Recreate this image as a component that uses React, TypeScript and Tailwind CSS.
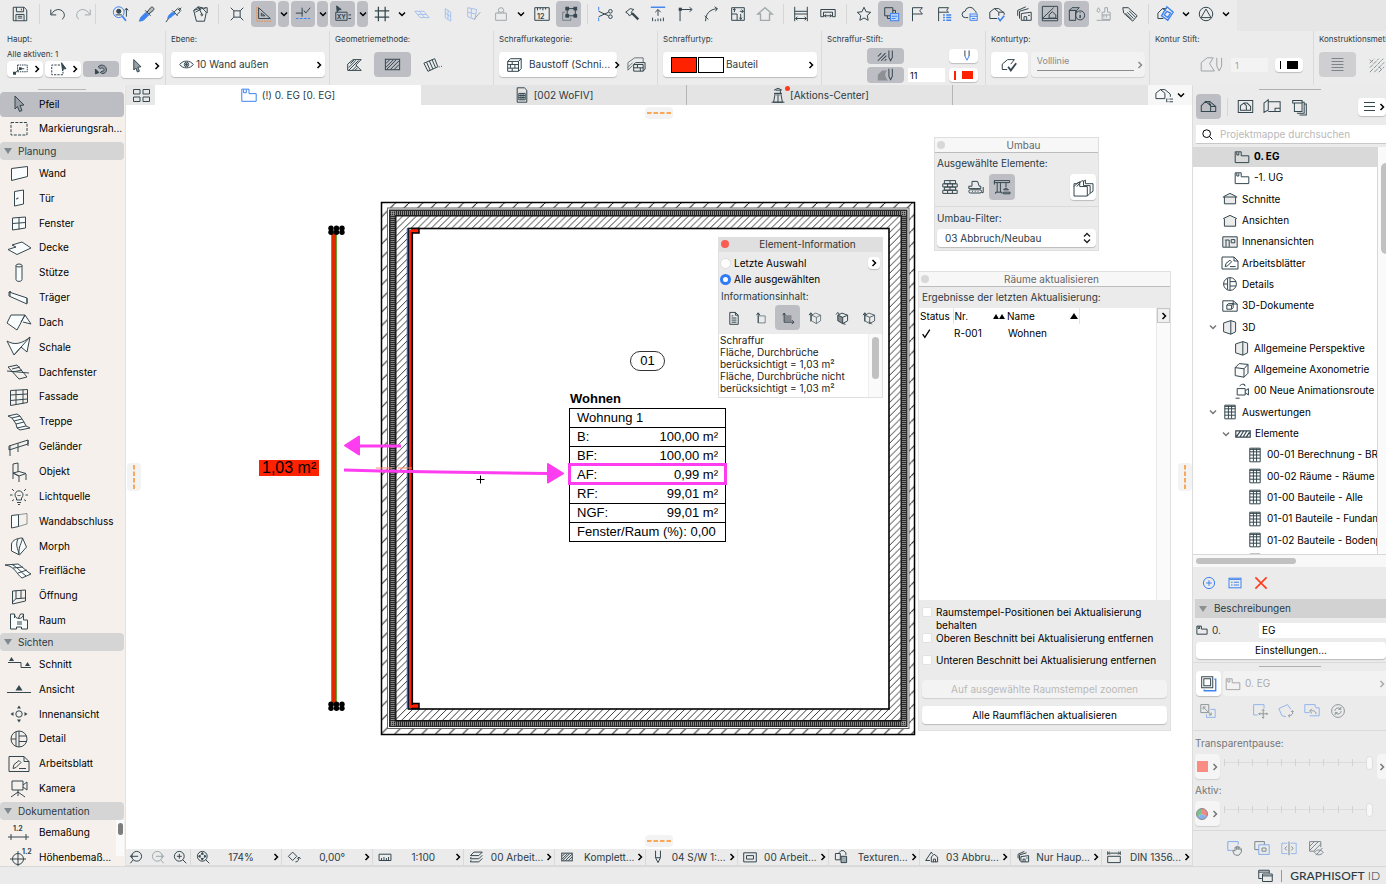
import React from "react";

const B = "#3f83f0";
const O = "#f28b3c";

const ICONS: Record<string, React.ReactNode> = {
  save: <><path d="M2.500 2.500h12l3 3v12h-15z" /><path d="M6 2.500v5h8v-5M5.500 17.500v-7h9v7M7.500 12.500h5M7.500 14.500h5M11.500 4v2" /></>,
  undo: <path d="M2 5v6h6M2.500 10.500C6 4 13 3.500 16 8c2 3 1 6-1.500 8" />,
  redo: <path d="M18 5v6h-6M17.500 10.500C14 4 7 3.500 4 8c-2 3-1 6 1.500 8" />,
  find: <><circle cx="7.500" cy="8" r="6" stroke={B} /><path d="M11.500 12.500l4 5" stroke={B} strokeWidth="2" /><circle cx="7.500" cy="7" r="2.300" fill="currentColor" /><path d="M4 11h7M16 4v9M14 6l2-2.500L18 6" /></>,
  pipette: <><path d="M9 8l-6 6-1.500 4L6 17l6-6" fill={B} stroke={B} /><path d="M8 6l6 6M10 8l4-5c2-2 5 1 3 3l-5 4z" fill="currentColor" fillOpacity=".3" /></>,
  syringe: <><path d="M8 8l-4 4-1 3 3-1 6-5" fill={B} stroke={B} /><path d="M1 19l3-4M8 6l6 6M10 8l4-4 3 3-4 4M15 3l3 3M16 5l2-2" /></>,
  bucket: <path d="M3 6l3 12h9l2-10-5-5zM3 6L8 2l8 2M8 2l4 8M12 10a1 1 0 1 0 .1 0M15 3h3v6M5 8l7-4" />,
  target: <path d="M6.500 6.500h7v7h-7zM3 3l3.500 3.500M17 3l-3.500 3.500M3 17l3.500-3.500M17 17l-3.500-3.500" />,
  triangle: <><path d="M4 3v12h13zM7 9v3h4z" /><path d="M2 2v16h16" stroke={O} strokeDasharray="2 1" /></>,
  guide: <><path d="M2 9h8M9 3v10M11 6l2 3 5-6" /><path d="M2 15h16" stroke={B} strokeDasharray="3 1.500" /></>,
  xy: <><path d="M2 8h12.500v9H2zM16 11h3M16 15h3" /><path d="M3 1l5 4-3 .5L3.500 8z" fill="currentColor" /><text x="3" y="15" fontSize="7" fontWeight="700" fill="currentColor" stroke="none">XY</text></>,
  hash: <path d="M6 2v16M13.500 2v16M2 6.500h16M2 13.500h16" strokeWidth="1.400" />,
  plane1: <path d="M2 7h10l6 7H8zM5 10.500h10M7 7l6 7" stroke={B} />,
  plane2: <path d="M7 4l6 4v10l-6-4zM7 9l6 4M10 6v10" stroke={B} />,
  plane3: <><path d="M3 3l10 2-2 11-8-3zM7 4v10M3 8l9 2" stroke={B} /><path d="M17 8l-7 8" /></>,
  weight: <path d="M4 9h12v8H4zM7 9V7M13 9V7M7 6a3 3 0 1 1 6 0l-1.500 2h-3z" />,
  ruler: <><path d="M2 3h16v14H2zM5 3v3M8 3v2M11 3v3M14 3v2" /><text x="4.500" y="15" fontSize="8" fontWeight="600" fill="currentColor" stroke="none">12</text></>,
  nodes: <><path d="M8 4h9v8H8z" /><g fill="currentColor"><rect x="6.500" y="2.500" width="3" height="3" /><rect x="15.500" y="2.500" width="3" height="3" /><rect x="6.500" y="10.500" width="3" height="3" /><rect x="15.500" y="10.500" width="3" height="3" /></g><path d="M3 8v9h9v-3M3 8h3" opacity=".5" /></>,
  scissors: <><path d="M3 2v4M3 14v4" stroke={B} /><path d="M3 7l11 5M3 13l11-5" /><circle cx="16" cy="13" r="2" /><circle cx="16" cy="7" r="2" /></>,
  hammer: <><path d="M3 8l5-4 4 1-3 3 1 2-3 2-1-2z" /><path d="M10 9l7 7" strokeWidth="2.500" /></>,
  upbars: <><path d="M2 2.500h16" stroke={B} strokeWidth="1.600" /><path d="M10 12V5M7 8l3-3 3 3M4 18v-4M7 18v-2M13 18v-3M16 18v-4M10 18v-3" /></>,
  corner: <><path d="M4.500 18V5H17" /><path d="M3 3h3.500v3.500H3z" fill="currentColor" stroke="none" /><path d="M15 2.500l3 2.500-3 2.500" /></>,
  arc: <><path d="M4 18C4 10 8 5 17 4" /><path d="M14 2l3 2-2 3M3 12l4 4" /></>,
  resize: <path d="M3 3h14v14H3zM3 10h6v7M12 7h4M14 5l2 2-2 2M6 8V4M4.500 5.500L6 4l1.500 1.500M13 10v6M11.500 14l1.500 2 1.500-2" />,
  roof: <path d="M2 10l8-7 8 7h-3v7H5v-7z" strokeWidth="1.500" />,
  stretch: <path d="M3 2v16M17 2v16M3 7h14M3 10h14M4 15h12M6 13l-2 2 2 2M14 13l2 2-2 2" />,
  fit: <path d="M2 5h16v8h-3V8H5v5H2zM6 12h8M8 10.500L6 12l2 1.500M12 10.500l2 1.500-2 1.500" />,
  star: <path d="M10 2.500l2.300 5 5.200.6-3.900 3.600 1 5.300-4.600-2.600L5.400 17l1-5.300L2.500 8.100l5.200-.6z" />,
  copyblue: <><path d="M3 3h9v9H3z" /><path d="M6 12v3h3M12 6h3v3" /><rect x="9.500" y="9.500" width="9" height="8" fill="#bdd3f7" stroke={B} /><path d="M11 12.500h6M11 15h4" stroke={B} /></>,
  flag: <path d="M5 18V3h11l-3 3.500L16 10H5" />,
  flaglist: <><path d="M4 18V3h11l-2 3 2 2H4" /><path d="M9 11h2M12.500 11H18M9 14h2M12.500 14H18M9 17h2M12.500 17H18" stroke={B} strokeWidth="1.700" /></>,
  cloud: <><path d="M8 14H5a3.500 3.500 0 0 1-.5-7A5.500 5.500 0 0 1 15 6a3.500 3.500 0 0 1 2 3" /><rect x="10" y="10" width="8" height="7" stroke={B} /><path d="M10 12.500h8M12 15h4" stroke={B} /></>,
  housecheck: <><path d="M10 15H2V8l5-4 5 4v4M7 4h5l6 5v2M12 8h6" /><path d="M11 14l2.500 3.500L18 12" stroke={B} strokeWidth="1.800" /></>,
  cards: <path d="M7 9.500l11-1.500v9H7zM5 15V7l10-3M3 12V6l9-4M10 17v-4h3v4M14.500 11.500h2" />,
  frame: <><path d="M1.500 1.500h17v16h-17zM1.500 15L14 3" /><path d="M9 14.500v-3.500l3.500-3.500 4 3.500v3.500zM2 15h16" /></>,
  boxinfo: <><path d="M1.500 6l3-3h8l-3 3zM1.500 6h7v11h-7zM9.500 6v2" /><circle cx="13.500" cy="11.500" r="5" /><path d="M13.500 11v3.500M13.500 8.300v1" strokeWidth="1.600" /></>,
  brush: <path d="M12 3h3v5h3v3H9V8h3zM9 11v5h9v-5M5 3c-3 4-1 5 0 5s3-1 0-5zM3 17h15M11 11v3M14 11v3" />,
  tag: <path d="M2 3h6l10 9-5 6-10-9zM5.500 6.500h.1M7 8l7 7M9 6.500l7 7M5 9l7 7" />,
  houseblue: <><path d="M1 15V9l5-5 4 2M1 15h6M6 4h5" /><path d="M11 2l7 6-6 9-7-5zM11 7l4 2-3 5-4-3z" stroke={B} strokeWidth="1.500" /></>,
  circletri: <><circle cx="10" cy="10" r="7.500" /><path d="M10 4.500l-5.500 9.500h11z" /></>,
  marquee: <rect x="2" y="3.500" width="16" height="12.500" strokeDasharray="3 1.300" />,
  arrow: <path d="M6 2l9 9-4 .5 2 5-2.500 1-2-5L6 15z" fill="#9aa0a5" />,
  magnet: <><path d="M9 15c5 4 11-1 8-7-2-4-8-5-11-1l3 2.500c2-2 4-1 5 .5s0 4-2.500 3z" fill="currentColor" fillOpacity=".3" /><path d="M2 10l5 5-5 2z" fill="currentColor" /></>,
  poly: <path d="M3 16V9l6-5h9l-6 6 6 6zM4 13l8-8M4 16L15 5M8 16l5-5M11 16l3-3M6 8.500l4-4" />,
  rect: <><rect x="2.500" y="4.500" width="15" height="11" /><path d="M3 9l4-4M3 13l8-8M4 15L14 5M8 15l9-9M12 15l5-5" /></>,
  rotrect: <path d="M1 8l12-5 3.500 9-11 5zM4 7l4 9M7 5.500l4 9M10 4l4 9M17.500 12h1M20 11.500h1" />,
  brick: <path d="M3 6l3-3h12v11l-3 3H3zM3 6h12v11M15 6l3-3M3 9.500h12M3 13.500h12M8 6v3.500M11 9.500v4M6 9.500v4M8 13.500V17" />,
  brick2: <><path d="M1 16V8l7-5h9v5M1 13l5-5M1 16l5-5" opacity=".7" /><path d="M7 10l2-2h10v7l-2 2H7zM7 10h10v7M7 13.500h10M11 10v3.500M14 13.500V17" /></>,
  hpen: <path d="M1 15l9-9M5 15l6-6M1 10l4-4M9 15l2-2M14 3v8l2 4 2-4V3" />,
  fpen: <><path d="M1 16V9l5-5h6c-4 4-2 8 1 12z" fill="#8d9196" stroke="none" /><path d="M14 2v9l2 4 2-4V2" /></>,
  penblue: <><path d="M7 2v8M13 2v8" /><path d="M7 10l3 6 3-6" stroke={B} /></>,
  contour: <><path d="M8 15H2.500V9l6-5H16l-4 5" /><path d="M9 12l3 4 6-8" strokeWidth="2" /></>,
  cpen: <path d="M1 15V8l5-4h5L8 9l4 6zM14 4v7l2 4 2-4V4" />,
  lines: <path d="M3 3h14M3 6.500h14M3 10h14M3 13.500h14M3 17h14" />,
  hatchbox: <path d="M2 8l5-5M2 13L12 3M2 18L17 3M7 18L18 7M12 18l6-6M2 4l3 3M12 12l3 3" strokeDasharray="5 1" />,
  grid4: <path d="M2.500 4.500H9V9H2.500zM12 4.500h6.500V9H12zM2.500 12H9v4.500H2.500zM12 12h6.500v4.500H12z" />,
  storyblue: <path d="M2 3.500h8v5h8V17H2zM4 4v3.500h3V4" stroke={B} />,
  story: <path d="M1.500 3.500H9v5h9.500V17h-17zM3.500 4v3.500H6V4" />,
  sheet: <path d="M4 1h9l3 3v15H4zM6 8h8v8H6zM6 10.700h8M6 13.300h8M8.700 8v8M11.300 8v8" />,
  lighthouse: <path d="M6.500 8h7l2 11h-11zM5 8h10M7 4h6v4M5 4l5-2.500L15 4M10 11v8M8 10h4M2 19h16" />,
  houselist: <><path d="M11 14H1V8l5-4 5 4v6zM6 4h5l6 5v3" /><path d="M13 14v4M14 14.500h1M16 14.500h4M14 17.500h1M16 17.500h4" /></>,
  wall: <path d="M2.500 5.500l16-2v10l-16 4z" fill="#fafdfd" />,
  door: <path d="M5.500 3.500l9-1.500v14l-9 2zM7 11l2-.5v-1" fill="#fafdfd" />,
  window: <path d="M3.500 5l13-1v11l-13 2zM10 4.500v12M3.500 10.500l13-1" fill="#fafdfd" />,
  slab: <path d="M-1 11.500l8-2.500-4-2L13 4l9 6-14 6.500z" fill="#fafdfd" />,
  column: <><path d="M7 2.500v14c0 2.500 6 2.500 6 0v-14" fill="#fafdfd" /><ellipse cx="10" cy="2.500" rx="3" ry="1.500" /></>,
  beam: <path d="M0 4l18 6v6L0 8zM0 4l2-.5M1 4v4M18 10v5" fill="#fafdfd" />,
  roofp: <path d="M2 3h14l-8 15-10-7zM12 10l4-7 6 9-8-2" fill="#fafdfd" />,
  shell: <path d="M-2 4c8 5 16 2 23-4l-3 15-6-5-7 8zM21 0L5 18" fill="#fafdfd" />,
  skylight: <path d="M-1 5l9-2 10 12-8 2zM-2 9l22 2M4 10l9-2M3 7l8-2" />,
  curtain: <path d="M1.500 3.500l17-1v13l-17 3zM7 3v15M14 2.700v14M1.500 8l17-1M1.500 13.500l17-1.500" />,
  stair: <path d="M-1 4l9-2 3 2-8 2zM3 6l2 3 8-2-2-3M5 9l2 3 8-2-2-3M7 12l1 4 9-2-2-4M8 16l3 2 10-2-4-2" fill="#fafdfd" />,
  rail: <path d="M0 9l19-6v4L0 13zM1 9v10M9 6v9M19 3v6" />,
  chair: <path d="M4 2l5-1v9M4 2v15M4 11l6-1.500 7 2-7 2.500zM10 14v6M17 12v6M4 11l6 3" />,
  bulb: <><path d="M7.500 14v-2a4 4 0 1 1 5 0v2zM8 16.500h4M9 18.500h2M8.500 9l1 1 1-1 1 1" /><path d="M1 9h2.500M16.500 9H19M3 3l2 2M17 3l-2 2M3 15l2-1.500M17 15l-2-1.500" /></>,
  wallend: <><path d="M2.500 4.500l7-.8V15.500l-7 1.500z" fill="#fafdfd" /><path d="M9.500 3.700L18 2.500v10.500l-8.500 2.500" opacity=".55" /></>,
  morph: <path d="M2.500 8c1-4 6-6 11-6l4 9-7 8-8-4zM9 3c-3 6 0 10 1 15M13.500 2c-1 6-4 8-3.500 16" fill="#fafdfd" />,
  mesh: <path d="M-4 4l13-1c5 3 9 8 13 10l-9 4C8 14 6 5-4 4zM3 3.500c5 2 9 8 14 11.500M4 7l10-1M9 12l9-3" fill="#fafdfd" />,
  opening: <path d="M3.500 5l13-1v11l-13 3zM7 4.700v8l9.500-.7M7 12.700L3.500 16M12 4.500v8" />,
  room: <path d="M1.500 3h4c0 6 9 6 9 0v6h4v9h-6v-2h-5v2h-6zM8 11h5M8 13h5M5.500 3v4M14.500 3h-3l-2 4" fill="#fafdfd" />,
  section: <><path d="M-1 8.500h13v5M12 13.500h10" /><path d="M0 7l2.500-4L5 7zM16 12l2.500-4 2.500 4z" fill="currentColor" stroke="none" /></>,
  elevation: <><path d="M-2 13.500h24" /><path d="M6.500 11.500L10 6l3.500 5.500z" fill="currentColor" stroke="none" /></>,
  interior: <><circle cx="10" cy="10" r="3.200" /><path d="M10 1.500l2 3H8zM10 18.500l2-3H8zM1.500 10l3-2v4zM18.500 10l-3-2v4z" fill="currentColor" stroke="none" /></>,
  detail: <><circle cx="10" cy="10" r="8" /><path d="M7 3v14M10 2v16M10 7h7.500M10 12.500h7.500M7 10H2" /></>,
  worksheet: <path d="M0 2.500h15l5 5v10H0zM15 2.500v5h5M4 14.500l1-4 5-4 2 2-5 5zM10 14.500h7" />,
  camera: <path d="M3 2h11v9H3zM14 6l4-3v8l-4-3M9 11v3M9 13l-7 5M9 13l7 5M9 13v4" />,
  dim: <><path d="M-1 14h21M2 11v6M17 11v6" /><text x="4" y="8" fontSize="7" fontWeight="700" fill="currentColor" stroke="none">1.2</text></>,
  level: <><circle cx="9" cy="11" r="5.500" /><path d="M1 11h16M9 3v16" /><text x="13" y="6" fontSize="7" fontWeight="700" fill="currentColor" stroke="none">1.2</text></>,
  eye: <><path d="M1 10c4-6 14-6 18 0-4 6-14 6-18 0z" /><circle cx="10" cy="10" r="3" /><circle cx="10" cy="10" r="1.300" fill="currentColor" /></>,
  house: <path d="M1.500 16V9l5-5 6 5v7zM6.500 4h5l7 6v6h-6M12.500 10h6M10 4l3 5" />,
  houseframe: <path d="M1.500 3h17v14h-17zM4 14.500V9l4-3 3 3v5.500zM8 6h4l4 4v4.500h-5" />,
  layout: <path d="M0 6l5-4v12l-5 3zM5 4.500h14V16H5M13 16v-4h6" />,
  books: <path d="M2 3h11v3H2zM4 6v10h9V6M13 5h2.500v13H7M16 7h2v13h-8" />,
  storys: <path d="M2 7l8-4 8 4M1 7.500h18M3 7.500V16h14V7.500" fill="#ececec" />,
  elev: <path d="M1.500 7L10 3l8.500 4M3 7v9.500h14V7" fill="#ececec" />,
  inner: <path d="M1 3.500h18v13H1zM5 16V7.500h4V16M11.500 7H16v4h-4.500zM3.500 7.500h1" fill="#ececec" />,
  doc3d: <path d="M1 3.500h13l5 4v9H1zM6 9h6v5H6zM6 9l2-2h6v5l-2 2M12 9l2-2M14 3.500v4h5" />,
  persp: <path d="M2 5l9-3 6 2v12l-6 3-9-3zM11 2v17" fill="#ececec" />,
  axon: <path d="M1.500 7l5-5 11 1v11l-5 5-11-2zM1.500 7l11 1.500V19M12.500 8.500l5-5.500" fill="#fafafa" />,
  route: <path d="M4 7h10v8H4zM14 10l4-3v8l-4-3M2 19h5M7 4c2-3 5-3 7-1M12 1l2 3" />,
  tablei: <path d="M3.500 1.500h13v17h-13zM3.500 6h13M3.500 10h13M3.500 14h13M8 2v16M12 2v16M3.500 3h13" />,
  hatchi: <path d="M1 6h18v8H1zM2 13l5-7M6 14l5-8M10 14l5-8M14 14l4-6" strokeWidth="1.500" />,
  plus: <><circle cx="10" cy="10" r="7" /><path d="M10 6.500v7M6.500 10h7" /></>,
  listb: <><rect x="2.500" y="4" width="15" height="12" /><path d="M3 5.500h14M5 9h2M8.500 9H15M5 12.500h2M8.500 12.500H15" /></>,
  cross: <path d="M3 3l14 14M17 3L3 17" strokeWidth="2" />,
  pages: <><path d="M2 2h13v13H2zM4.500 4.500h8v8h-8z" /><path d="M17 5h1.500v13.500H5V17" stroke={B} strokeWidth="1.600" /></>,
  swap: <><path d="M1 2h10v10H1z" /><path d="M8 14v4h11V8h-6" stroke={B} /><path d="M4 5l10 10M4 8V5h3M14 12v3h-3" /></>,
  move: <><path d="M7 15H2V2h13v5" stroke={B} /><path d="M14 8v11M8.500 13.500h11M12.500 9.500L14 8l1.500 1.500M12.500 17.500L14 19l1.500-1.500M10 12l-1.500 1.500L10 15M18 12l1.500 1.500L18 15" /></>,
  rot: <><path d="M10 17l-5-1L1 7l11-5 4 6" stroke={B} /><path d="M18 10c1 4-1 6-5 6M15 14l-2 2 2 2M16.500 11L18 9.500l1.500 1.500" /></>,
  back: <><path d="M7 12H1V2h13v3M7 16h12V6h-5" stroke={B} /><path d="M15 14c0-4-3-5-7-4M10 7l-3 3 3 3" /></>,
  cycle: <><circle cx="10" cy="10" r="8" /><path d="M6 10a4 4 0 0 1 7-2.500M13.500 5v3h-3M14 10a4 4 0 0 1-7 2.500M6.500 15v-3h3" /></>,
  hand: <><path d="M6 13H1V2h13v4" stroke={B} /><path d="M9 18l-2-5 2 0 1 1V9h2v3V8h2v4V9h2v3l2-1v4l-3 4h-4z" /></>,
  overlap: <><path d="M6 12H1V2h12v4" /><path d="M6 6h13v12H6z" stroke={B} /><path d="M10 10h5v4h-5z" /></>,
  split: <><path d="M8 4H1v13h7M12 4h7v13h-7" stroke={B} strokeOpacity=".8" /><path d="M10 2v17M7 8l-2 2.500L7 13M13 8l2 2.500-2 2.500" /></>,
  hatcheye: <path d="M8 14H2V2h14v7M2 8l6-6M2 13L13 2M7 14l9-9M8 15.500c3-4 8-4 11 0-3 4-8 4-11 0zM18 10l-8 9" />,
  zoomback: <><circle cx="11" cy="9" r="7" /><path d="M13 9H2M5 6L2 9l3 3M6 14l-4 5" /></>,
  zoomfwd: <><circle cx="9" cy="9" r="7" /><path d="M7 9h11M15 6l3 3-3 3M14 14l4 5" /></>,
  zoomin: <><circle cx="9" cy="9" r="7" /><path d="M9 5.500v7M5.500 9h7M14 14l5 5" /></>,
  zoomfit: <><circle cx="9" cy="9" r="7" /><path d="M14 14l5 5" /><path d="M9 3.500l1.500 2.500h-3zM9 14.500l1.500-2.500h-3zM3.500 9L6 7.500v3zM14.500 9L12 7.500v3z" fill="currentColor" /></>,
  rotate: <path d="M8 3l6 6-6 6-6-6zM12 17c4 0 5-3 5-7M14.500 12.500L17 10l2.500 2.500" />,
  scale: <path d="M1.500 6h17v9h-17zM5 15v-3.500M8.500 15v-5M12 15v-3.500M15 15v-5" />,
  layers: <path d="M2 8l5-5h12l-5 5zM3 10l-1 2.500h12l5-5M3 14.500L2 17h12l5-5" />,
  pen: <path d="M6.500 1v10l3.500 7 3.500-7V1M6.500 11h7" />,
  frame2: <path d="M1 4h18v13H1zM5 8h10v5H5z" />,
  override: <><path d="M2 5h7v9H2zM7 4l3-3h4l3 3v3" /><path d="M10 9h8v9h-8z" fill="currentColor" fillOpacity=".4" /></>,
  reno: <path d="M1 15L9 3l2 3M9 10l4-4 5 4v7H9zM12 17v-4h3v4M1 15h6" />,
  dims: <path d="M1 9h18v9H1zM1 2v5M19 2v5M2 4.500h16M4 2.500l-2 2 2 2M16 2.500l2 2-2 2" />,
  wallbrick: <path d="M3 2h14v4H3zM1 6h18v4H1zM3 10h14v4H3zM1 14h18v4H1zM10 2v4M7 6v4M13 6v4M10 10v4M7 14v4M13 14v4" />,
  dozer: <path d="M5 9V3h7l2 6h2v3H1V9zM3 17.500a2 2 0 0 1 0-4h12a2 2 0 0 1 0 4zM5 15.500h1M8.500 15.500h1M12 15.500h1M19 10v7h-2" />,
  crane: <path d="M.5 2h19v2.500H.5zM4 4.500v12M8 4.500v12M2 18.500v-2h8v2M15 4.500v6M12 13.500c0-2 6-2 6 0zM12 16.500h8v2h-8zM.5 2v5" />,
  folder3: <path d="M0 6h3l3-2v5h8v10H0zM6 5l2-2h2v5h7v8l-3 3M10 4l2-2v4h8v8l-3 2M0 9l5-5M3 9l4-5" />,
  page: <path d="M4 2h8l4 4v13H4zM12 2v4h4M6.500 7H9M6.500 10h7M6.500 13h7M6.500 16h7" />,
  axisY: <><path d="M6 7h10v10H6z" opacity=".6" /><path d="M6 17V3M3.500 6L6 2.500 8.500 6" /></>,
  axisXY: <><path d="M5 6h10v9H5z" fill="#87898e" stroke="none" /><path d="M4.500 3v13H18M2.500 6l2-3 2 3M15.500 13l3 3-3 2.500" /></>,
  cube: <><path d="M5 6l6-3 7 3v8l-6 4-7-4zM5 6l7 3v9M12 9l6-3" opacity=".65" /><path d="M4 15V3M1.500 6L4 2.500 6.500 6" /></>,
  cubef: <><path d="M4 6l7 3v9l-7-4z" fill="#87898e" /><path d="M4 6l6-3 8 3v8l-7 4M11 9l7-3M1.500 5L4 2l2.500 3M11 18l4 1" /></>,
  cubea: <><path d="M4 6l6-3 8 3v8l-7 4-7-4zM4 6l7 3v9M11 9l7-3" opacity=".8" /><path d="M4 15V3M1.500 6L4 2.500 6.500 6M10 15l4 4" /></>,
  windows: <path d="M5 14H1V3h14v4M1 5.500h14M6 8h13v10H6zM6 10.500h13" />,
  check: <path d="M3 11l4 6L16 3" strokeWidth="2.400" />,
  search: <><circle cx="8.500" cy="8.500" r="7" /><path d="M13.500 13.500L19 19" /></>,
  sel1: <><rect x="6" y="4" width="13" height="9" strokeDasharray="2 1" /><path d="M2 15l8-6h5" /><path d="M0 13h4v4H0zM8 7h3.500v3.500H8z" fill="currentColor" stroke="none" /></>,
  sel2: <><path d="M12 4H1v13h15v-4" strokeDasharray="3 1.500" /><path d="M14 1l6 8-3.500 0-1 3z" fill="currentColor" /></>,
};

function Icon({ name, size = 20, className = "text-[#34474f]" }: { name: string; size?: number; className?: string }) {
  return (
    <svg aria-hidden="true" width={size} height={size} viewBox="0 0 20 20" fill="none" stroke="currentColor" strokeWidth={20 / size} className={"shrink-0 overflow-visible " + className}>
      {ICONS[name]}
    </svg>
  );
}

function Chevron({ dir = "right", className = "" }: { dir?: "right" | "down"; className?: string }) {
  return (
    <svg aria-hidden="true" width="8" height="8" viewBox="0 0 8 8" fill="none" stroke="currentColor" strokeWidth="1.500" className={"shrink-0 " + className}>
      <path d={dir === "right" ? "M2.500 1L5.500 4L2.500 7" : "M1 2.500L4 5.500L7 2.500"} />
    </svg>
  );
}

const white = "rounded bg-white shadow-[0_1px_1px_rgba(0,0,0,0.2)]";
const W: Record<number, string> = {
  1: "w-1", 2: "w-2", 6: "w-1.5", 10: "w-2.5", 13: "w-[13px]", 14: "w-[14px]", 20: "w-5", 26: "w-[26px]", 27: "w-[27px]", 30: "w-[30px]",
};

type Tool = [kind: string, width: number, state?: "on" | "dim"];
const TOOLS: Tool[] = [
  ["save", 30], ["|", 2], ["undo", 30], ["redo", 20, "dim"], ["|", 1], ["", 10], ["find", 27], ["pipette", 26], ["syringe", 27], ["bucket", 26], ["|", 10],
  ["target", 27], ["triangle", 27, "on"], ["v", 13, "on"], ["guide", 26, "on"], ["v", 13, "on"], ["xy", 27, "on"], ["v", 13, "on"], ["hash", 26], ["v", 14],
  ["plane1", 26, "dim"], ["plane2", 26, "dim"], ["plane3", 26, "dim"], ["weight", 27, "dim"], ["v", 14], ["ruler", 27], ["nodes", 27, "on"], ["|", 10],
  ["scissors", 26], ["hammer", 27], ["upbars", 26], ["corner", 27], ["arc", 26], ["resize", 27], ["roof", 27, "dim"], ["|", 10],
  ["stretch", 26], ["fit", 27], ["|", 10], ["star", 26], ["copyblue", 27, "on"], ["flag", 26], ["flaglist", 27], ["cloud", 26], ["housecheck", 27], ["cards", 27],
  ["frame", 26, "on"], ["boxinfo", 27, "on"], ["brush", 26, "dim"], ["tag", 27], ["|", 10], ["houseblue", 26], ["v", 14], ["circletri", 26], ["v", 14],
];

function Toolbar() {
  return (
    <div className="flex h-[31px] shrink-0 bg-[#e6e6e6]">
      <div className="flex items-center bg-[#ececec] pb-[3px] pl-[5px] pr-1">
        {TOOLS.map(([k, w, s], i) =>
          k === "" ? <span key={i} className={W[w]} /> :
          k === "|" ? <span key={i} className={"flex justify-center " + W[w]}><i className="h-5 w-px bg-[#d6d6d6]" /></span> : (
            <button key={i} aria-label={k === "v" ? "Menü" : k} className={"flex h-[26px] shrink-0 px-px " + W[w]}>
              <span className={"flex h-full w-full items-center justify-center rounded " + (s === "on" ? "bg-[#bdbdc4]" : s === "dim" ? "opacity-40" : "")}>
                {k === "v" ? <Chevron dir="down" className="text-black" /> : <Icon name={k} size={18} />}
              </span>
            </button>
          ))}
      </div>
    </div>
  );
}

function Section({ label, children }: { label: string; children: React.ReactNode }) {
  return (
    <section className="flex h-[54px] w-[164px] shrink-0 flex-col border-r border-[#dadada] pl-[5px] pr-1 pt-px">
      <h2 className="h-[13px] whitespace-nowrap text-[8px] leading-[14px]">{label}</h2>
      {children}
    </section>
  );
}

function InfoBox() {
  return (
    <div className="flex shrink-0 overflow-hidden bg-[#ececec]">
      <section className="flex h-[54px] w-[166px] shrink-0 gap-[2px] border-r border-[#dadada] pl-[7px] pt-px">
        <div>
          <h2 className="h-[13px] text-[8px] leading-[14px]">Haupt:</h2>
          <p className="mt-[3px] h-[12px] text-[8px] leading-[12px]">Alle aktiven: 1</p>
          <div className="mt-px flex gap-[2px]">
            <button aria-label="Auswahl" className={"flex h-4 w-9 items-center justify-between pl-1.5 pr-[2px] " + white}><Icon name="sel1" size={15} /><Chevron className="text-black" /></button>
            <button aria-label="Markierung" className={"flex h-4 w-9 items-center justify-between pl-1.5 pr-[2px] " + white}><Icon name="sel2" size={15} /><Chevron className="text-black" /></button>
            <button aria-label="Magnet" className="flex h-4 w-9 items-center justify-center rounded bg-[#bdbdc4]"><Icon name="magnet" size={14} /></button>
          </div>
        </div>
        <button aria-label="Pfeil" className={"mt-[21px] flex h-[25px] w-[42px] items-center justify-between pl-2 pr-[2px] " + white}><Icon name="arrow" size={16} /><Chevron className="text-black" /></button>
      </section>
      <Section label="Ebene:">
        <button className={"mt-[7px] flex h-[25px] items-center gap-[2px] px-2 text-[10px] " + white}><Icon name="eye" size={15} />10 Wand außen<Chevron className="-mr-1.5 ml-auto text-black" /></button>
      </Section>
      <Section label="Geometriemethode:">
        <div className="mt-[7px] flex items-center gap-[2px]">
          <button aria-label="Polygon" className="flex h-[25px] w-[37px] items-center justify-center rounded"><Icon name="poly" size={18} /></button>
          <button aria-label="Rechteck" className="flex h-[25px] w-[37px] items-center justify-center rounded bg-[#bdbdc4]"><Icon name="rect" size={19} /></button>
          <button aria-label="Gedrehtes Rechteck" className="flex h-[25px] w-[37px] items-center justify-center rounded"><Icon name="rotrect" size={18} /></button>
        </div>
      </Section>
      <Section label="Schraffurkategorie:">
        <div className="mt-[7px] flex items-center gap-[2px]">
          <button className={"flex h-[25px] w-[118px] items-center gap-1.5 whitespace-nowrap pl-1.5 pr-px text-[10px] " + white}><Icon name="brick" size={18} />Baustoff (Schni...<Chevron className="-ml-[3px] text-black" /></button>
          <button aria-label="Baustoff" className="flex h-[25px] w-[36px] items-center justify-center"><Icon name="brick2" size={19} /></button>
        </div>
      </Section>
      <Section label="Schraffurtyp:">
        <button className={"mt-[7px] flex h-[25px] items-center gap-px px-2 text-[10px] " + white}>
          <i className="h-4 w-[26px] border border-black bg-[#ff2200]" /><i className="mr-px h-4 w-[26px] border border-black bg-white" />Bauteil<Chevron className="-mr-1.5 ml-auto text-black" />
        </button>
      </Section>
      <section className="h-[54px] w-[164px] shrink-0 border-r border-[#dadada] pl-[5px] pt-px">
        <h2 className="h-[13px] text-[8px] leading-[14px]">Schraffur-Stift:</h2>
        <div className="-mt-px ml-10 grid w-[112px] grid-cols-[37px_37px_29px] items-center gap-x-1 gap-y-[3px]">
          <button aria-label="Vordergrundstift" className="mt-1 flex h-4 items-center justify-center rounded bg-[#bdbdc4]"><Icon name="hpen" size={17} /></button>
          <span />
          <button aria-label="Stift" className={"mt-1 flex h-[14px] items-center justify-center pl-1.5 " + white}><Icon name="penblue" size={14} /></button>
          <button aria-label="Hintergrundstift" className="flex h-4 items-center justify-center rounded bg-[#bdbdc4]"><Icon name="fpen" size={17} /></button>
          <input aria-label="Stiftnummer" defaultValue="11" className="h-[14px] w-full bg-white pl-[2px] text-[9px] text-black" />
          <button aria-label="Stiftfarbe" className={"flex h-[14px] items-center justify-center gap-1.5 " + white}><i className="h-[9px] w-[2px] bg-[#ff2200]" /><i className="h-2 w-[11px] bg-[#ff2200]" /></button>
        </div>
      </section>
      <Section label="Konturtyp:">
        <div className="mt-[7px] flex gap-[3px]">
          <button aria-label="Kontur" className={"flex h-[25px] w-[37px] items-center justify-center " + white}><Icon name="contour" size={18} /></button>
          <button disabled className="flex h-[25px] w-[115px] items-center gap-[2px] rounded bg-[#f2f2f2] pb-1 pl-1.5 pr-px text-left text-[9px] text-[#8b8b8b] shadow-[0_1px_1px_rgba(0,0,0,0.12)]"><span className="flex-1 border-b border-[#8b8b8b] pb-[3px]">Volllinie</span><Chevron className="mt-1" /></button>
        </div>
      </Section>
      <Section label="Kontur Stift:">
        <div className="ml-[45px] mt-[12px] flex items-center gap-[7px]">
          <Icon name="cpen" size={24} className="-my-1 opacity-40" />
          <input aria-label="Konturstift" disabled defaultValue="1" className="h-[14px] w-[37px] bg-[#f3f3f3] pl-1 text-[9px] text-[#a0a0a0]" />
          <button aria-label="Konturfarbe" className={"flex h-[14px] w-7 items-center justify-center gap-1.5 " + white}><i className="h-2 w-px bg-black" /><i className="h-2 w-[11px] bg-black" /></button>
        </div>
      </Section>
      <Section label="Konstruktionsmethode:">
        <div className="mt-[7px] flex gap-[12px]">
          <button aria-label="Methode 1" className="flex h-[25px] w-[37px] items-center justify-center rounded bg-[#cfcfd2]"><Icon name="lines" size={17} className="opacity-50" /></button>
          <button aria-label="Methode 2" className="flex h-[25px] items-center"><Icon name="hatchbox" size={18} className="opacity-50" /></button>
        </div>
      </Section>
    </div>
  );
}

const PLAN: [string, string][] = [
  ["wall", "Wand"], ["door", "Tür"], ["window", "Fenster"], ["slab", "Decke"], ["column", "Stütze"], ["beam", "Träger"], ["roofp", "Dach"], ["shell", "Schale"], ["skylight", "Dachfenster"], ["curtain", "Fassade"],
  ["stair", "Treppe"], ["rail", "Geländer"], ["chair", "Objekt"], ["bulb", "Lichtquelle"], ["wallend", "Wandabschluss"], ["morph", "Morph"], ["mesh", "Freifläche"], ["opening", "Öffnung"], ["room", "Raum"],
];
const VIEWS: [string, string][] = [["section", "Schnitt"], ["elevation", "Ansicht"], ["interior", "Innenansicht"], ["detail", "Detail"], ["worksheet", "Arbeitsblatt"], ["camera", "Kamera"]];
const DOCS: [string, string][] = [["dim", "Bemaßung"], ["level", "Höhenbemaß..."]];

function PaletteItem({ icon, label, on }: { icon: string; label: string; on?: boolean }) {
  return (
    <button className={"flex w-full min-h-0 items-center gap-[10px] whitespace-nowrap pl-[9px] text-left text-[10px] text-black " + (on ? "rounded bg-[#bdbdc4]" : "")}>
      <Icon name={icon} />{label}
    </button>
  );
}
function PaletteHead({ label }: { label: string }) {
  return <h3 className="flex h-[18px] shrink-0 items-center gap-1.5 rounded-sm bg-[#d5d5d5] pl-1 text-[10px]"><i className="border-x-4 border-t-[6px] border-x-transparent border-t-[#7f8a8e]" />{label}</h3>;
}

function Palette() {
  return (
    <aside className="flex w-[126px] shrink-0 flex-col border-r border-[#e2e2e2] bg-[#f5f0eb] pr-px">
      <div className="h-[7px] shrink-0 bg-[#ececec] pt-1"><i className="mx-auto block h-px w-12 bg-[#b8b8b8]" /></div>
      <div className="grid h-[49px] shrink-0 auto-rows-fr"><PaletteItem icon="arrow" label="Pfeil" on /><PaletteItem icon="marquee" label="Markierungsrah..." /></div>
      <div className="mt-px"><PaletteHead label="Planung" /></div>
      <div className="mt-px grid h-[472px] shrink-0 auto-rows-fr">{PLAN.map(([i, l]) => <PaletteItem key={l} icon={i} label={l} />)}</div>
      <PaletteHead label="Sichten" />
      <div className="mt-px grid h-[149px] shrink-0 auto-rows-fr">{VIEWS.map(([i, l]) => <PaletteItem key={l} icon={i} label={l} />)}</div>
      <div className="mt-px"><PaletteHead label="Dokumentation" /></div>
      <div className="flex min-h-0 flex-[1_1_0] overflow-hidden">
        <div className="grid h-[50px] flex-1 auto-rows-fr">{DOCS.map(([i, l]) => <PaletteItem key={l} icon={i} label={l} />)}</div>
        <div className="h-9 w-2 bg-[#fafafa] pt-[3px]"><i className="mx-auto block h-3 w-[5px] rounded-full bg-[#7d7d7d]" /></div>
      </div>
    </aside>
  );
}

function Tabs() {
  const tab = "flex w-[266px] items-center justify-center gap-1 border-r text-[10px]";
  return (
    <nav className="flex h-5 shrink-0 bg-[#e4e4e4]">
      <button aria-label="Übersicht" className="flex w-[29px] items-center justify-center bg-[#e8e8e8]"><Icon name="grid4" /></button>
      <button className={tab + " border-transparent bg-white"}><Icon name="storyblue" size={18} />(!) 0. EG [0. EG]</button>
      <button className={tab + " border-[#b5b5b5]"}><Icon name="sheet" size={16} />[002 WoFIV]</button>
      <button className={tab + " border-[#b5b5b5]"}><span className="relative"><Icon name="lighthouse" size={16} /><i className="absolute -right-1 -top-px h-[5px] w-[5px] rounded-full bg-[#ff3b1e]" /></span>[Aktions-Center]</button>
      <span className="flex-1" />
      <button aria-label="Ansicht wählen" className="flex w-11 items-center justify-center gap-1 bg-[#f7f7f7]"><Icon name="houselist" size={18} /><Chevron dir="down" className="text-black" /></button>
    </nav>
  );
}

function Drawing() {
  const dots = [228, 232, 704, 708];
  return (
    <svg aria-hidden="true" width="1066" height="744" viewBox="126 105 1066 744" className="absolute left-0 top-0">
      <defs>
        <pattern id="wide" width="13.600" height="13.600" patternUnits="userSpaceOnUse"><path d="M-1 14.600L14.600 -1" stroke="#222" strokeWidth="1" /></pattern>
        <pattern id="tight" width="6.800" height="6.800" patternUnits="userSpaceOnUse"><path d="M-1 7.800L7.800 -1M-1 1L1 -1M5.800 7.800L7.800 5.800" stroke="#222" strokeWidth=".9" /></pattern>
      </defs>
      <rect x="381" y="202" width="534" height="533" fill="#fff" />
      <rect x="381" y="202" width="534" height="533" fill="url(#wide)" />
      <rect x="387.500" y="208" width="521.500" height="520.500" fill="#fff" stroke="#666" />
      <rect x="389" y="209.500" width="518.500" height="517.500" fill="#2b2b2b" />
      <g stroke="#a2a2a2" strokeWidth="4" strokeDasharray=".8 1.200"><path d="M391 213H906M391 723.700H906M392.600 211V726M904 211V726" /></g>
      <rect x="396" y="216" width="505" height="504.500" fill="#fff" stroke="#111" />
      <rect x="396" y="216" width="505" height="504.500" fill="url(#tight)" />
      <rect x="408.500" y="228.500" width="480.500" height="480.500" fill="#fff" stroke="#000" strokeWidth="1.600" />
      <rect x="381.500" y="202.500" width="533" height="532" fill="none" stroke="#000" strokeWidth="1.500" />
      <path d="M411 228.500h8v4.500h-8M411 708.500h8v-5h-8" fill="#ff2200" stroke="#000" strokeWidth="1.500" />
      <rect x="409" y="230" width="3" height="478" fill="#ff2200" />
      <path d="M412.300 232V705" stroke="#000" strokeWidth="1.600" />
      <path d="M407.500 228V709" stroke="#2b62b8" strokeWidth="1.500" />
      <rect x="331.500" y="230" width="5" height="476" fill="#e02a00" stroke="#62a53a" />
      {dots.map((y) => [331, 336.5, 342].map((x) => <circle key={x + "-" + y} cx={x} cy={y + 0.3} r="2.700" fill="#000" />))}
      <path d="M376 468h16M398 468h14" stroke="#ff8f66" />
      <g stroke="#ff3df0" strokeWidth="3" fill="#ff3df0" strokeLinejoin="round">
        <path d="M401 446H356" /><path d="M345 445.500l14-9v18z" strokeWidth="2" />
        <path d="M344 470l36 1 60 1 108 1.500" /><path d="M548 464l15 9.500-15 9z" strokeWidth="2" />
      </g>
      <path d="M476.500 479.500h8M480.500 475.500v8" stroke="#000" />
    </svg>
  );
}

const STAMP = [["B:", "100,00 m²"], ["BF:", "100,00 m²"], ["AF:", "0,99 m²"], ["RF:", "99,01 m²"], ["NGF:", "99,01 m²"]];

function Stamp() {
  return (
    <div className="absolute left-[443px] top-[286px] w-[157px] font-['Liberation_Sans',sans-serif] text-[13px] text-black">
      <h3 className="pl-px text-[13px] font-bold leading-4">Wohnen</h3>
      <table className="mt-px h-[133px] w-full table-fixed border-collapse bg-white leading-4">
        <tbody>
          <tr><td colSpan={2} className="border border-black px-[7px] py-px">Wohnung 1</td></tr>
          {STAMP.map(([k, v]) => (
            <tr key={k} className="border border-black"><td className="py-px pl-[7px]">{k}</td><td className="py-px pr-[7px] text-right">{v}</td></tr>
          ))}
          <tr><td colSpan={2} className="whitespace-nowrap border border-black px-[7px] py-px">Fenster/Raum (%): 0,00</td></tr>
        </tbody>
      </table>
      <i className="absolute -left-px top-[72px] h-[22px] w-[159px] border-[3px] border-[#ff3df0]" />
    </div>
  );
}

function Title({ text, red }: { text: string; red?: boolean }) {
  return (
    <header className={"relative flex h-[15px] shrink-0 items-center justify-center border-b pl-[14px] text-[10px] leading-3 " + (red ? "border-transparent bg-[#dfdfdf] text-[#333]" : "border-[#bdbdbd] bg-[#f7f7f7] text-[#666]")}>
      <button aria-label="Schließen" className={"absolute left-[2px] top-[3px] h-2 w-2 rounded-full " + (red ? "bg-[#fb5c54]" : "bg-[#d8d8d8]")} />
      {text}
    </header>
  );
}

function ElementInfo() {
  const radio = "h-[11px] w-[11px] appearance-none rounded-full border border-[#ddd] bg-white checked:border-[3px] checked:border-[#2f7cf6]";
  return (
    <section className="absolute left-[592px] top-[132px] flex h-[161px] w-[165px] flex-col border border-t-0 border-[#e0e0e0] bg-[#ebebeb] text-[10px]">
      <Title text="Element-Information" red />
      <div className="flex h-[19px] items-center justify-between pl-px pr-[2px] pt-[3px]">
        <label className="flex items-center gap-[3px] text-black"><input type="radio" name="sel" className={radio} />Letzte Auswahl</label>
        <button aria-label="Mehr" className={"flex h-3 w-3 items-center justify-center text-black " + white}><Chevron /></button>
      </div>
      <label className="flex h-[17px] items-center gap-[3px] pl-px text-black"><input type="radio" name="sel" defaultChecked className={radio} />Alle ausgewählten</label>
      <p className="pl-[2px] leading-[16px]">Informationsinhalt:</p>
      <div className="flex gap-[2px] pl-[2px] pt-px">
        {["page", "axisY", "axisXY", "cube", "cubef", "cubea"].map((n) => (
          <button key={n} aria-label={n} className={"flex h-[25px] w-[25px] items-center justify-center rounded " + (n === "axisXY" ? "bg-[#bdbdc4]" : "")}><Icon name={n} size={14} /></button>
        ))}
      </div>
      <div className="mt-1 flex flex-1 justify-between overflow-hidden bg-white">
        <p className="whitespace-nowrap pl-px leading-[12px] text-[#222]">Schraffur<br />Fläche, Durchbrüche<br />berücksichtigt = 1,03 m²<br />Fläche, Durchbrüche nicht<br />berücksichtigt = 1,03 m²</p>
        <div className="w-[14px] shrink-0 border-l border-[#eee] bg-[#fafafa] pt-[3px]"><i className="mx-auto block h-[42px] w-[7px] rounded-full bg-[#c1c1c1]" /></div>
      </div>
    </section>
  );
}

function Umbau() {
  return (
    <section className="absolute left-[808px] top-[32px] h-[114px] w-[165px] border border-[#dedede] bg-[#ebebeb] text-[10px]">
      <Title text="Umbau" />
      <p className="pl-[2px] pt-[3px] leading-[15px]">Ausgewählte Elemente:</p>
      <div className="mt-[3px] flex h-[26px] pl-[2px] pr-[2px]">
        {["wallbrick", "dozer", "crane"].map((n) => (
          <button key={n} aria-label={n} className={"flex w-[26px] items-center justify-center rounded " + (n === "crane" ? "bg-[#bdbdc4]" : "")}><Icon name={n} size={16} /></button>
        ))}
        <button aria-label="Umbau-Palette" className={"ml-auto flex w-[26px] items-center justify-center " + white}><Icon name="folder3" size={19} /></button>
      </div>
      <div className="mt-[6px] border-t border-[#dadada] px-[2px] pt-1">
        <label htmlFor="filter" className="leading-[14px]">Umbau-Filter:</label>
        <div className="relative mt-[3px]">
          <select id="filter" className={"h-[18px] w-full appearance-none pl-2 text-[10px] " + white}><option>03 Abbruch/Neubau</option></select>
          <svg aria-hidden="true" className="pointer-events-none absolute right-[5px] top-[3px]" width="8" height="12" viewBox="0 0 8 12" fill="none" stroke="#222" strokeWidth="1.400"><path d="M1 4.500l3-3 3 3M1 7.500l3 3 3-3" /></svg>
        </div>
      </div>
    </section>
  );
}

function Rooms() {
  const cb = "mt-px h-[10px] w-[10px] shrink-0 appearance-none rounded-[2px] border border-[#e2e2e2] bg-white";
  const tri = <i className="inline-block border-x-[3px] border-b-[5px] border-x-transparent border-b-black" />;
  const tri2 = <i className="inline-block border-x-4 border-b-[6px] border-x-transparent border-b-black" />;
  return (
    <section className="absolute left-[792px] top-[166px] flex h-[460px] w-[253px] flex-col border border-[#e0e0e0] bg-[#ebebeb] text-[10px]">
      <Title text="Räume aktualisieren" />
      <p className="h-[21px] shrink-0 pl-[3px] leading-[21px]">Ergebnisse der letzten Aktualisierung:</p>
      <div className="flex h-[292px] shrink-0 bg-white text-black">
        <div className="flex-1">
          <table className="w-full table-fixed border-collapse text-left">
            <thead><tr className="h-4">
              <th className="w-[34px] border-r border-[#e3e3e3] pl-px font-normal">Status</th>
              <th className="w-[53px] pl-px pr-px font-normal"><span className="flex items-center justify-between">Nr.<span className="flex">{tri}{tri}</span></span></th>
              <th className="w-[73px] border-r border-[#e3e3e3] pl-px pr-px font-normal"><span className="flex items-center justify-between">Name{tri2}</span></th>
              <th aria-label="Weitere" />
            </tr></thead>
            <tbody><tr className="h-[18px]"><td className="pl-[2px]"><Icon name="check" size={11} className="text-black" /></td><td className="pl-px">R-001</td><td className="pl-[2px]">Wohnen</td><td /></tr></tbody>
          </table>
        </div>
        <div className="w-[14px] border-l border-[#e8e8e8] bg-[#fafafa]"><button aria-label="Spalten" className="flex h-[15px] w-[13px] items-center justify-center border border-[#c5c5c5] bg-[#f0f0f0]"><Chevron /></button></div>
      </div>
      <div className="px-[3px] pt-[6px] leading-[13px] text-black">
        <label className="flex h-[26px] gap-1"><input type="checkbox" className={cb} />Raumstempel-Positionen bei Aktualisierung<br />behalten</label>
        <label className="flex gap-1"><input type="checkbox" className={cb} />Oberen Beschnitt bei Aktualisierung entfernen</label>
        <label className="mt-[9px] flex gap-1"><input type="checkbox" className={cb} />Unteren Beschnitt bei Aktualisierung entfernen</label>
        <button disabled className="mt-[13px] block h-[18px] w-full rounded bg-[#f3f3f3] text-[#b9b9b9] shadow-[0_1px_1px_rgba(0,0,0,0.12)]">Auf ausgewählte Raumstempel zoomen</button>
        <button className={"mt-2 block h-[18px] w-full " + white}>Alle Raumflächen aktualisieren</button>
      </div>
    </section>
  );
}

function Handle({ pos, vertical }: { pos: string; vertical?: boolean }) {
  return (
    <div className={"absolute flex items-center justify-center rounded-sm bg-[#f3f3f3] " + (vertical ? "h-7 w-[14px] " : "h-3 w-7 ") + pos}>
      <svg aria-hidden="true" width={vertical ? 2 : 24} height={vertical ? 24 : 2} stroke="#fba75a" strokeWidth="2" strokeDasharray="4.500 2"><path d={vertical ? "M1 0V24" : "M0 1H24"} /></svg>
    </div>
  );
}

function Canvas() {
  return (
    <main className="relative min-h-[744px] flex-1 overflow-hidden bg-white">
      <Drawing />
      <Handle pos="left-[519px] top-[2px]" />
      <Handle pos="left-[519px] top-[730px]" />
      <Handle pos="left-[1px] top-[358px]" vertical />
      <Handle pos="right-0 top-[358px]" vertical />
      <span className="absolute left-[133px] top-[355px] bg-[#ff2200] px-[3px] font-['Liberation_Sans',sans-serif] text-[16px] leading-4 text-black">1,03 m²</span>
      <span className="absolute left-[504px] top-[246px] h-5 w-[35px] rounded-full border border-[#333] text-center font-['Liberation_Sans',sans-serif] text-[13px] leading-[18px] text-black">01</span>
      <Stamp />
      <ElementInfo />
      <Umbau />
      <Rooms />
    </main>
  );
}

const QUICK: [string, string][] = [["", "174%"], ["rotate", "0,00°"], ["scale", "1:100"], ["layers", "00 Arbeit..."], ["rect", "Komplett..."], ["pen", "04 S/W 1:..."], ["frame2", "00 Arbeit..."], ["override", "Texturen..."], ["reno", "03 Abbru..."], ["cards", "Nur Haup..."], ["dims", "DIN 1356..."]];

function QuickBar() {
  return (
    <div className="flex h-[17px] shrink-0 border-b border-[#dcdcdc] bg-[#ebebeb] text-[10px]">
      <div className="flex w-[64px] items-center justify-between px-[3px]">
        {["zoomback", "zoomfwd", "zoomin"].map((n) => <button key={n} aria-label={n} className={n === "zoomfwd" ? "opacity-40" : ""}><Icon name={n} size={14} /></button>)}
      </div>
      {QUICK.map(([i, l], n) => (
        <button key={n} className="flex flex-1 items-center gap-[2px] whitespace-nowrap border-l border-[#d9d9d9] pl-[5px] pr-px">
          <Icon name={i || "zoomfit"} size={14} /><span className={"flex-1 " + (n < 3 ? "text-center" : "text-right")}>{l}</span><Chevron className="text-black" />
        </button>
      ))}
    </div>
  );
}

const TREE: [pad: string, icon: string, label: string, open?: boolean][] = [
  ["pl-[41px]", "story", "0. EG"], ["pl-[41px]", "story", "-1. UG"], ["pl-[29px]", "storys", "Schnitte"], ["pl-[29px]", "elev", "Ansichten"], ["pl-[29px]", "inner", "Innenansichten"],
  ["pl-[29px]", "worksheet", "Arbeitsblätter"], ["pl-[29px]", "detail", "Details"], ["pl-[29px]", "doc3d", "3D-Dokumente"], ["pl-[16px]", "persp", "3D", true],
  ["pl-[41px]", "persp", "Allgemeine Perspektive"], ["pl-[41px]", "axon", "Allgemeine Axonometrie"], ["pl-[41px]", "route", "00 Neue Animationsroute"],
  ["pl-[16px]", "tablei", "Auswertungen", true], ["pl-[29px]", "hatchi", "Elemente", true],
  ["pl-[54px]", "tablei", "00-01 Berechnung - BRI"], ["pl-[54px]", "tablei", "00-02 Räume - Räume"], ["pl-[54px]", "tablei", "01-00 Bauteile - Alle"], ["pl-[54px]", "tablei", "01-01 Bauteile - Fundament"], ["pl-[54px]", "tablei", "01-02 Bauteile - Bodenplatte"], ["pl-[54px]", "tablei", ""],
];

function FadeRow({ label, children, more }: { label: string; children: React.ReactNode; more?: boolean }) {
  return (
    <div className="pl-[2px]">
      <p className="h-[18px] text-[10px] leading-[14px] text-[#777]">{label}</p>
      <div className="flex h-[29px] items-start gap-1">
        <button disabled aria-label={label} className="flex h-[25px] w-[25px] shrink-0 items-center justify-center gap-[3px] rounded bg-[#f5f5f5] text-[#777] shadow-[0_1px_1px_rgba(0,0,0,0.12)]">{children}<Chevron /></button>
        <div className="relative mt-px h-4 w-[149px]">
          <div className="absolute inset-x-0 top-[7px] h-px bg-[#dcdcdc]" />
          <div className="absolute inset-x-0 top-1 flex justify-between pr-1.5">{Array.from({ length: 11 }, (_, i) => <i key={i} className="h-[7px] w-px bg-[#d3d3d3]" />)}</div>
          <input type="range" disabled aria-label={label} defaultValue={100} className="absolute inset-0 h-4 w-full appearance-none bg-transparent [&::-webkit-slider-thumb]:h-[14px] [&::-webkit-slider-thumb]:w-[7px] [&::-webkit-slider-thumb]:appearance-none [&::-webkit-slider-thumb]:rounded-full [&::-webkit-slider-thumb]:border [&::-webkit-slider-thumb]:border-[#dedede] [&::-webkit-slider-thumb]:bg-[#f8f8f8]" />
        </div>
        {more && <button disabled aria-label="Mehr" className="flex h-[25px] flex-1 items-center justify-center rounded-l bg-[#f5f5f5] text-[#777]"><Chevron /></button>}
      </div>
    </div>
  );
}

function Navigator() {
  return (
    <aside className="flex w-[194px] shrink-0 flex-col border-l border-[#dcdcdc] bg-[#ebebeb] text-[10px]">
      <i className="mx-auto mt-1 h-px w-[62px] shrink-0 bg-[#b0b0b0]" />
      <div className="mt-1 flex h-[25px] shrink-0 items-center pl-[3px]">
        <button aria-label="Projektmappe" className="flex h-[25px] w-[25px] items-center justify-center rounded bg-[#bdbdc4]"><Icon name="house" size={17} /></button>
        <i className="ml-1.5 mr-1 h-[18px] w-px bg-[#d6d6d6]" />
        {["houseframe", "layout", "books"].map((n) => <button key={n} aria-label={n} className="flex w-[27px] justify-center"><Icon name={n} size={17} /></button>)}
        <button aria-label="Menü" className={"ml-auto flex h-[18px] w-7 items-center justify-between pl-1.5 " + white}>
          <svg aria-hidden="true" width="11" height="9" stroke="#34474f"><path d="M0 .5h12M0 4.500h12M0 8.500h12" /></svg><Chevron className="text-black" />
        </button>
      </div>
      <label className="ml-[3px] mt-[6px] flex h-[19px] shrink-0 items-center gap-[7px] border-b border-[#c8c8c8] bg-white pl-1.5">
        <Icon name="search" size={11} className="text-black" />
        <input type="search" aria-label="Suche" placeholder="Projektmappe durchsuchen" className="w-full min-w-0 bg-transparent placeholder:text-[#b9b9b9]" />
      </label>
      <div className="mt-[3px] flex h-[408px] shrink-0 border-b border-[#d8d8d8]">
        <div className="min-w-0 flex-1 overflow-hidden border-r border-[#d8d8d8] bg-white">
          <ul className="-mt-px grid h-[426px] auto-rows-fr text-black">
            {TREE.map(([pad, icon, label, open], i) => (
              <li key={i} className={"flex min-h-0 items-center gap-1 whitespace-nowrap " + pad + (i === 0 ? " bg-[#d9d9d9] font-bold" : "")}>
                {open && <Chevron dir="down" className="mr-px text-[#777]" />}
                <Icon name={icon} size={16} />{label}
              </li>
            ))}
          </ul>
        </div>
        <div className="w-2 shrink-0 bg-[#fafafa] pl-[3px] pt-4"><i className="block h-[91px] w-[5px] rounded-l-full bg-[#c1c1c1]" /></div>
      </div>
      <div className="h-3 shrink-0 bg-[#f8f8f8] pl-[3px] pt-[3px]"><i className="block h-[6px] w-[100px] rounded-full bg-[#c1c1c1]" /></div>
      <div className="flex h-[32px] shrink-0 items-center gap-[10px] pl-2">
        <button aria-label="Neu"><Icon name="plus" size={16} className="text-[#3f83f0]" /></button>
        <button aria-label="Liste"><Icon name="listb" size={16} className="text-[#3f83f0]" /></button>
        <button aria-label="Löschen"><Icon name="cross" size={16} className="text-[#ff3b1e]" /></button>
      </div>
      <h3 className="ml-[2px] flex h-[19px] shrink-0 items-center gap-[7px] bg-[#d2d2d2] pl-1"><i className="border-x-4 border-t-[6px] border-x-transparent border-t-[#8a8f92]" />Beschreibungen</h3>
      <div className="flex h-6 shrink-0 items-center pl-[3px]"><Icon name="story" size={12} /><label htmlFor="desc" className="w-[51px] pl-1">0.</label><input id="desc" defaultValue="EG" className="h-[15px] min-w-0 flex-1 bg-white pl-[3px] text-black" /></div>
      <button className={"ml-[3px] h-[17px] shrink-0 text-black " + white}>Einstellungen...</button>
      <div className="mt-[3px] h-[9px] shrink-0 border-t border-[#dadada] pt-[3px]"><i className="mx-auto block h-px w-[62px] bg-[#b0b0b0]" /></div>
      <div className="flex h-[25px] shrink-0 gap-[2px] pl-[3px]">
        <button aria-label="Transparentpause" className={"flex w-[25px] shrink-0 items-center justify-center " + white}><Icon name="pages" size={17} /></button>
        <button disabled className="flex flex-1 items-center gap-1 rounded-l bg-[#f2f2f2] pl-[2px] text-[#a9a9a9]"><Icon name="story" size={16} className="" />0. EG<Chevron className="ml-auto" /></button>
      </div>
      <div className="flex h-[34px] shrink-0 items-center gap-[10px] pb-1 pl-[7px] opacity-50">
        {["swap", "move", "rot", "back", "cycle"].map((n, i) => <button key={n} disabled aria-label={n} className={i === 0 ? "mr-[26px]" : ""}><Icon name={n} size={16} /></button>)}
      </div>
      <div className="h-[101px] shrink-0 border-y border-[#dadada] pt-[5px]">
        <FadeRow label="Transparentpause:" more><i className="h-[11px] w-[11px] bg-[#f98d83]" /></FadeRow>
        <FadeRow label="Aktiv:">
          <svg aria-hidden="true" width="12" height="12" viewBox="0 0 12 12"><path d="M6 6V.500A5.500 5.500 0 0 1 10.800 8.700z" fill="#f28a86" /><path d="M6 6l4.800 2.700a5.500 5.500 0 0 1-9.600 0z" fill="#86b3ef" /><path d="M6 6L1.200 8.700A5.500 5.500 0 0 1 6 .5z" fill="#7cc48f" /><circle cx="6" cy="6" r="5.500" fill="none" stroke="#888" /></svg>
        </FadeRow>
      </div>
      <div className="flex h-[34px] shrink-0 items-center gap-[11px] pl-[34px] opacity-60">
        {["hand", "overlap", "split", "hatcheye"].map((n) => <button key={n} disabled aria-label={n}><Icon name={n} size={16} /></button>)}
      </div>
    </aside>
  );
}

export default function App() {
  return (
    <div className="flex min-h-screen flex-col overflow-hidden bg-[#ebebeb] font-['Inter',sans-serif] text-[10px] text-[#2c3a42]">
      <Toolbar />
      <InfoBox />
      <div className="flex flex-1">
        <Palette />
        <div className="flex min-w-0 flex-1 flex-col"><Tabs /><Canvas /><QuickBar /></div>
        <Navigator />
      </div>
      <footer className="flex h-[18px] shrink-0 items-center justify-end gap-2 border-t border-[#d8d8d8] pr-[6px] font-['Lato',sans-serif] text-[12px] leading-4">
        <Icon name="windows" size={15} /><i className="h-3 w-px bg-[#999]" /><span><b className="font-medium">GRAPHISOFT</b> <span className="font-light">ID</span></span>
      </footer>
    </div>
  );
}
